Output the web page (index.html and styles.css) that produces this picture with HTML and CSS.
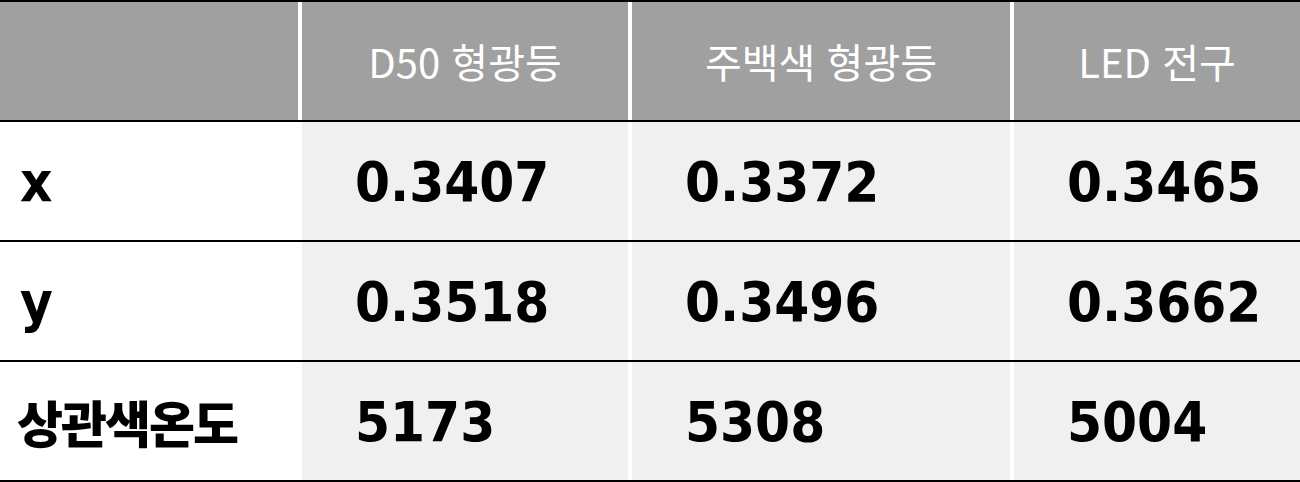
FILE: index.html
```html
<!DOCTYPE html>
<html lang="ko">
<head>
<meta charset="utf-8">
<title>색좌표 비교</title>
<link rel="stylesheet" href="styles.css">
</head>
<body>
<div class="table">
  <div class="row head">
    <div class="cell"></div>
    <div class="cell">D50 형광등</div>
    <div class="cell">주백색 형광등</div>
    <div class="cell">LED 전구</div>
  </div>
  <div class="row">
    <div class="cell label">x</div>
    <div class="cell num">0.3407</div>
    <div class="cell num">0.3372</div>
    <div class="cell num">0.3465</div>
  </div>
  <div class="row">
    <div class="cell label">y</div>
    <div class="cell num">0.3518</div>
    <div class="cell num">0.3496</div>
    <div class="cell num">0.3662</div>
  </div>
  <div class="row">
    <div class="cell label ko">상관색온도</div>
    <div class="cell num">5173</div>
    <div class="cell num">5308</div>
    <div class="cell num">5004</div>
  </div>
</div>
</body>
</html>
```
FILE: styles.css
```css
html, body {
  margin: 0;
  padding: 0;
  background: #ffffff;
}

.table {
  width: 1300px;
  border-top: 2px solid #000000;
}

.row {
  display: grid;
  grid-template-columns: 298px 326px 378px 286px;
  column-gap: 4px;
  height: 118px;
  border-bottom: 2px solid #000000;
  background: #ffffff;
}

.cell {
  display: flex;
  align-items: center;
  background: #f0f0f0;
  color: #000000;
  font-family: "DejaVu Sans Condensed", "DejaVu Sans", sans-serif;
  font-stretch: condensed;
  font-weight: bold;
  font-size: 56px;
}

.num {
  padding-left: 53px;
}

.label {
  background: #ffffff;
  padding-left: 20px;
}

.ko {
  font-family: "Noto Sans CJK KR", sans-serif;
  font-stretch: normal;
  font-size: 50px;
  font-weight: 900;
  letter-spacing: -2px;
  padding-left: 17px;
}

.head .cell {
  background: #a0a0a0;
  color: #ffffff;
  justify-content: center;
  font-family: "Noto Sans CJK KR", sans-serif;
  font-stretch: normal;
  font-weight: 400;
  font-size: 40px;
}
```
